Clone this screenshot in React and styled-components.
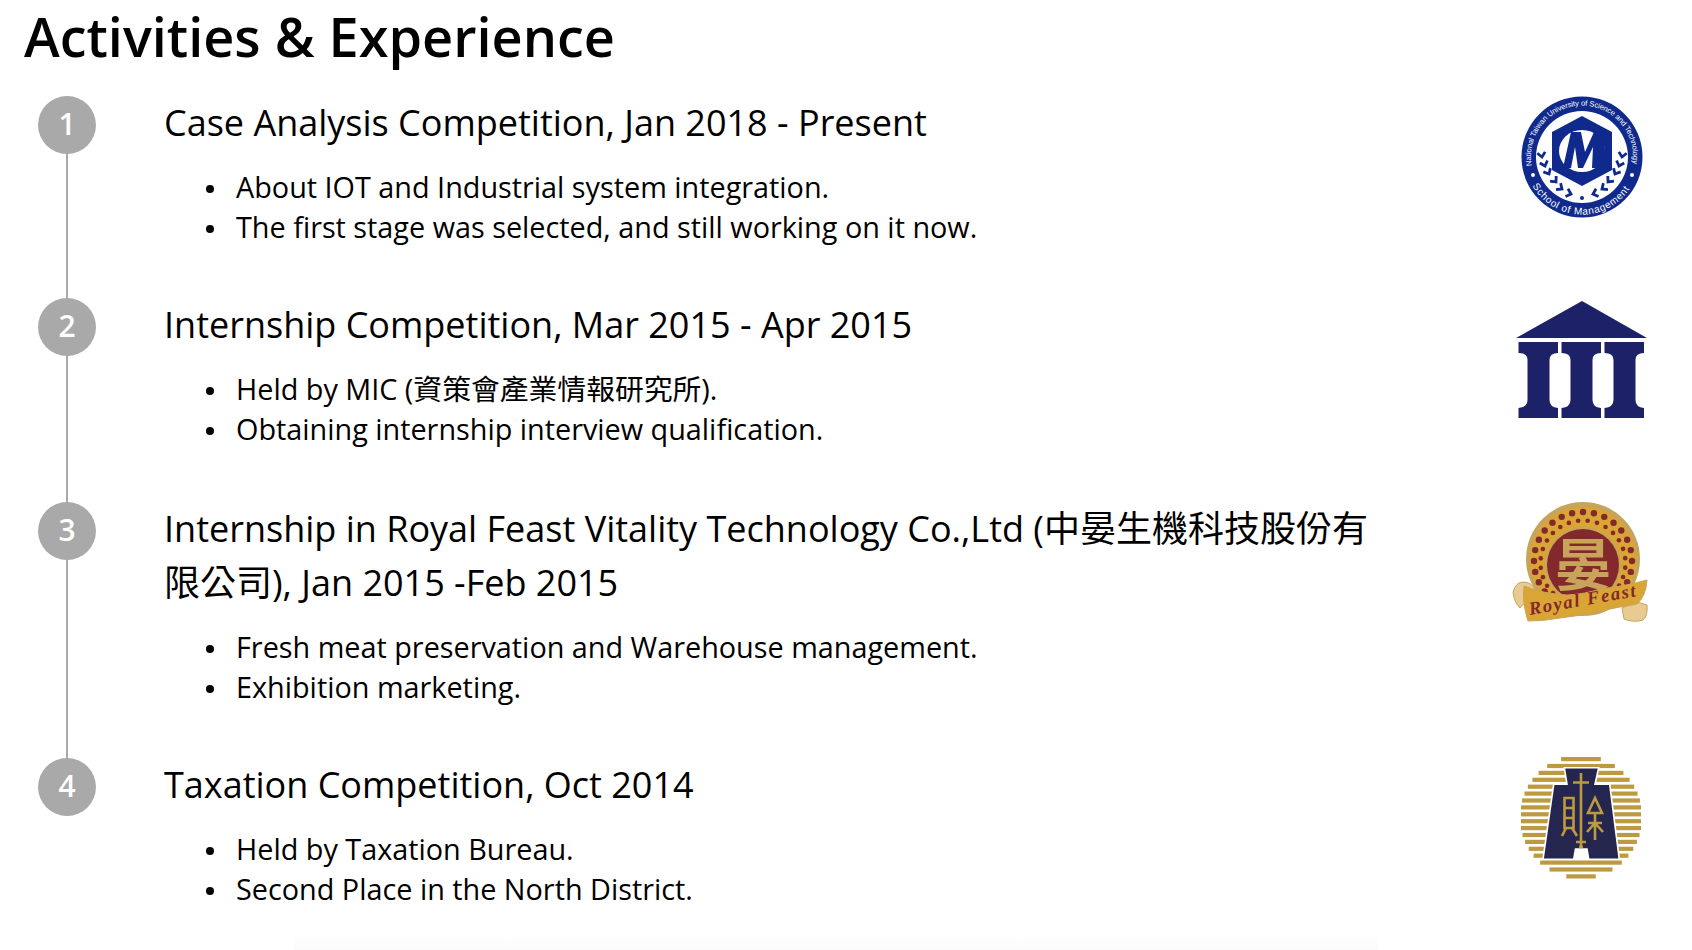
import React from "react";
import styled, { createGlobalStyle } from "styled-components";

const Global = createGlobalStyle`
  html, body { margin: 0; padding: 0; background: #fff; }
  body { width: 1692px; height: 950px; overflow: hidden; }
  #root { height: 950px; }
`;
const FONT = `"Open Sans", "Noto Sans CJK TC", sans-serif`;

const Page = styled.main`
  font-family: ${FONT};
  color: #000;
  padding: 0 44px 0 24px;
  display: flex;
  flex-direction: column;
  height: 950px;
  box-sizing: border-box;
`;
const Title = styled.h1`
  flex: none;
  margin: 0;
  font-size: 54px;
  font-weight: 600;
  line-height: 72px;
  height: 96px;
`;
const Timeline = styled.ol`
  flex: none;
  list-style: none;
  margin: 0;
  padding: 0;
`;
const Item = styled.li`
  display: grid;
  grid-template-columns: 58px 1fr 132px;
  padding-left: 14px;
`;
const Rail = styled.div`
  display: flex;
  flex-direction: column;
  align-items: center;
`;
const Dot = styled.div`
  width: 58px;
  height: 58px;
  flex: none;
  border-radius: 50%;
  background: #a9a9a9;
  color: #fff;
  font-size: 30px;
  font-weight: 600;
  line-height: 56px;
  text-align: center;
`;
const Line = styled.div`
  flex: 1;
  width: 2px;
  background: #a9a9a9;
  display: ${(p) => (p.$hidden ? "none" : "block")};
`;
const Body = styled.div`
  padding: 0 130px ${(p) => p.$pad}px 68px;
`;
const Heading = styled.h2`
  margin: 0 0 17px;
  font-size: 36px;
  font-weight: 400;
  line-height: 54px;
`;
const Bullets = styled.ul`
  list-style: none;
  margin: 0;
  padding: 0 0 0 42px;
  font-size: 28.8px;
  line-height: 40px;
`;
const Bullet = styled.li`
  display: flex;
  align-items: center;
  gap: 22px;
  &::before {
    content: "";
    flex: none;
    width: 8px;
    height: 8px;
    margin-top: 3px;
    border-radius: 50%;
    background: #000;
  }
`;
const Logo = styled.div`
  display: flex;
  justify-content: center;
  align-items: flex-start;
  margin-top: ${(p) => p.$top}px;
  svg { display: block; flex: none; overflow: visible; }
`;
const Fade = styled.div`
  flex: none;
  margin: auto 270px 0;
  height: 14px;
  background: linear-gradient(#fff, #fafafa);
`;

const NAVY = "#0f2a8c";
const chevrons = [
  [21, 62, 80], [24, 71, 72], [28, 79, 62], [35, 87, 50], [41, 94, 35], [50, 99, 18],
];

const NavyRound = () => (
  <svg width="122" height="124" viewBox="0 0 122 124">
    <defs>
      <path id="topArc" d="M11 71.7 A51 51 0 1 1 111 71.7" />
      <path id="botArc" d="M11 90 A57 57 0 0 0 111 90" />
    </defs>
    <circle cx="61" cy="62" r="60.5" fill={NAVY} />
    <circle cx="61" cy="62" r="46" fill="#fff" />
    <text fill="#fff" fontFamily="Liberation Sans, sans-serif" fontSize="7.6">
      <textPath href="#topArc" startOffset="1" textLength="176" lengthAdjust="spacing">National Taiwan University of Science and Technology</textPath>
    </text>
    <text fill="#fff" fontFamily="Liberation Sans, sans-serif" fontSize="10">
      <textPath href="#botArc" startOffset="1" textLength="116" lengthAdjust="spacing">School of Management</textPath>
    </text>
    <circle cx="12" cy="80" r="2" fill="#fff" />
    <circle cx="111" cy="80" r="2" fill="#fff" />
    <polygon points="61,21 91,37 91,75 61,91 31,75 31,37" fill={NAVY} />
    <ellipse cx="61" cy="56" rx="23" ry="21" fill="#fff" />
    <path d="M42 73 L50 37 H60 L64 57 L73 37 H83 L85 73 H71 L72 52 L62 73 H57 L54 52 L50 73 Z" fill={NAVY} />
    <g fill="none" stroke={NAVY} strokeWidth="2.8">
      {chevrons.map(([x, y, a]) => (
        <React.Fragment key={x}>
          <path d="M-4.5 -4 L0 0 L-4.5 4" transform={`translate(${x} ${y}) rotate(${a})`} />
          <path d="M-4.5 -4 L0 0 L-4.5 4" transform={`translate(${122 - x} ${y}) rotate(${180 - a})`} />
        </React.Fragment>
      ))}
    </g>
    <circle cx="61" cy="103" r="2" fill={NAVY} />
  </svg>
);

const COL = "M0 0 H39.5 V11 Q31 11 31 18 V58 Q31 65 39.5 66 V76 H0 V66 Q9 65 9 58 V18 Q9 11 0 11 Z";
const Temple = () => (
  <svg width="132" height="118" viewBox="0 0 132 118">
    <polygon points="66,0 131,37 0,37" fill="#1d2168" />
    <path d={COL} fill="#1d2168" transform="translate(2.5 41)" />
    <path d={COL} fill="#1d2168" transform="translate(45.5 41)" />
    <path d={COL} fill="#1d2168" transform="translate(88.5 41)" />
  </svg>
);

const GOLD = "#d9a534";
const TAN = "#c8a45a";
const MAROON = "#83282b";
const Feast = () => {
  const outer = [];
  const inner = [];
  for (let i = 0; i < 28; i++) {
    const a = (i / 28) * Math.PI * 2;
    outer.push(<circle key={i} cx={69 + Math.cos(a) * 49} cy={61 + Math.sin(a) * 49} r="3.2" fill={MAROON} />);
    const b = a + 0.11;
    inner.push(<circle key={i} cx={69 + Math.cos(b) * 42.5} cy={63 + Math.sin(b) * 42.5} r="2.3" fill={MAROON} />);
  }
  return (
    <svg width="136" height="124" viewBox="0 0 136 124">
      <circle cx="69" cy="59" r="57" fill={TAN} />
      <circle cx="69" cy="60" r="53" fill={GOLD} />
      {outer}
      {inner}
      <circle cx="69" cy="65" r="38" fill={TAN} />
      <circle cx="69" cy="65" r="36" fill={MAROON} />
      <text x="69" y="85" textAnchor="middle" fontFamily="Noto Sans CJK TC, sans-serif" fontWeight="700" fontSize="56" fill={TAN}>晏</text>
      <path d="M-1 92 Q2 82 9 82 Q18 82 21 90 L21 106 Q10 100 6 108 Q0 102 -1 92 Z" fill="#e8cb92" stroke={TAN} />
      <path d="M108 108 L123 102 L133 105 Q134 116 129 120 Q120 123 110 119 Z" fill="#e8cb92" stroke={TAN} />
      <path d="M10 86 Q30 94 53 95 Q72 94 86 89 Q112 86 133 80 Q132 96 123 104 Q105 107 86 111 Q66 116 46 118 Q30 121 14 121 Q8 103 10 86 Z" fill={GOLD} stroke={TAN} />
      <text x="16" y="115" fontFamily="Liberation Serif, serif" fontStyle="italic" fontWeight="700" fontSize="18.5" letterSpacing="1.7" fill={MAROON} transform="rotate(-10 16 115)">Royal Feast</text>
    </svg>
  );
};

const TAXGOLD = "#bd9a3f";
const Tax = () => {
  const stripes = [];
  for (let i = 0; i < 18; i++) {
    const y = i * 6.9;
    const d = Math.abs(y + 2.1 - 60);
    const w = Math.min(60, Math.sqrt(Math.max(61.2 * 61.2 - d * d, 0)));
    stripes.push(<rect key={i} x={60 - w} y={y} width={w * 2} height="4.2" fill={TAXGOLD} />);
  }
  return (
    <svg width="120" height="120" viewBox="1 0 120 120">
      {stripes}
      <path d="M52.7 102.3 H22 L32.7 27.3 H46 L43.3 10.7 H77.7 L74 27.3 H88.7 L98.3 102.3 H67.7 L66 92 H54.5 Z" fill="#25264f" stroke="#fff" strokeWidth="1.6" />
      <path d="M54.5 92 H66 L67.7 102.3 H52.7 Z" fill="#fff" />
      <g fill="none" stroke={TAXGOLD} strokeWidth="2.6">
        <path d="M60 16 V90 M52 25.5 H68 M55 85 H65 M58 90 H62" />
        <path d="M43.5 41 H52.5 V71 H43.5 Z M43.5 51 H52.5 M43.5 61 H52.5 M45 71 L41 79 M51 71 L56 79" />
        <path d="M74 41 L67 56 H81 Z M74 56 V83 M67 66 H81 M74 66 L66 75 M74 66 L82 75" />
      </g>
    </svg>
  );
};

const items = [
  { n: 1, logo: <NavyRound />, top: -1, pad: 51, title: "Case Analysis Competition, Jan 2018 - Present",
    points: ["About IOT and Industrial system integration.", "The first stage was selected, and still working on it now."] },
  { n: 2, logo: <Temple />, top: 3, pad: 53, title: "Internship Competition, Mar 2015 - Apr 2015",
    points: ["Held by MIC (資策會產業情報研究所).", "Obtaining internship interview qualification."] },
  { n: 3, logo: <Feast />, top: -2, pad: 51, title: "Internship in Royal Feast Vitality Technology Co.,Ltd (中晏生機科技股份有限公司), Jan 2015 -Feb 2015",
    points: ["Fresh meat preservation and Warehouse management.", "Exhibition marketing."] },
  { n: 4, logo: <Tax />, top: -1, pad: 20, title: "Taxation Competition, Oct 2014",
    points: ["Held by Taxation Bureau.", "Second Place in the North District."] },
];

export default function App() {
  return (
    <Page>
      <Global />
      <Title>Activities &amp; Experience</Title>
      <Timeline>
        {items.map((it, i) => (
          <Item key={it.n}>
            <Rail>
              <Dot>{it.n}</Dot>
              <Line $hidden={i === items.length - 1} />
            </Rail>
            <Body $pad={it.pad}>
              <Heading>{it.title}</Heading>
              <Bullets>
                {it.points.map((p) => <Bullet key={p}>{p}</Bullet>)}
              </Bullets>
            </Body>
            <Logo $top={it.top}>{it.logo}</Logo>
          </Item>
        ))}
      </Timeline>
      <Fade />
    </Page>
  );
}
